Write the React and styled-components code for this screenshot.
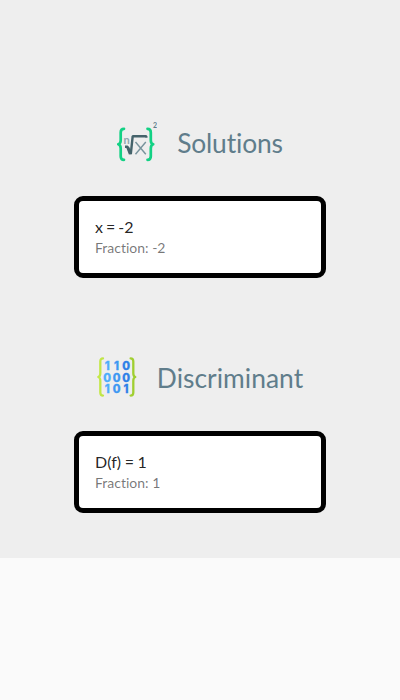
import React from "react";
import styled, { createGlobalStyle } from "styled-components";

const GlobalStyle = createGlobalStyle`
  body {
    margin: 0;
    background: #fafafa;
    font-family: Lato, "Open Sans", sans-serif;
    font-variant-ligatures: none;
  }
`;

const Results = styled.main`
  box-sizing: border-box;
  display: flex;
  flex-direction: column;
  align-items: center;
  gap: 75px;
  height: 558px;
  padding-top: 118px;
  background: #eeeeee;
`;

const Section = styled.section`
  display: flex;
  flex-direction: column;
  align-items: center;
  gap: 30px;
`;

const Heading = styled.header`
  display: flex;
  align-items: center;
  gap: 20px;
  height: 48px;
`;

const Icon = styled.svg`
  display: block;
  width: 40px;
  height: 40px;
  flex: none;
`;

const Title = styled.h2`
  margin: 0;
  padding-top: 2px;
  color: #607d8b;
  font-size: 26.4px;
  font-weight: 400;
  line-height: 40px;
  letter-spacing: ${(p) => p.$tracking}px;
  white-space: nowrap;
`;

const Card = styled.div`
  box-sizing: border-box;
  width: 252px;
  height: 82px;
  padding: 14px 16px;
  border: 5px solid #000;
  border-radius: 9px;
  background: #fff;
`;

const Primary = styled.p`
  margin: 0;
  color: rgba(0, 0, 0, 0.87);
  font-size: 16px;
  line-height: 24px;
  word-spacing: ${(p) => p.$wordSpacing}px;
`;

const Secondary = styled.p`
  margin: 0;
  color: rgba(0, 0, 0, 0.54);
  font-size: 14px;
  line-height: 18px;
`;

const Digits = styled.text`
  font-family: Inter, sans-serif;
  font-size: 11.2px;
  font-weight: 800;
  text-anchor: middle;
`;

const Symbol = styled.text`
  font-family: Lato, sans-serif;
  font-size: ${(p) => p.$size}px;
  font-weight: ${(p) => p.$weight || 400};
`;

function RootIcon() {
  return (
    <Icon viewBox="0 0 40 40" fill="none">
      <g stroke="#12d184" strokeWidth="2.7" strokeLinecap="round" strokeLinejoin="round">
        <path d="M7 6.8C4.4 6.8 3.7 8 3.7 10.4V18.2C3.7 20.4 3 21.8 1.3 22.3C3 22.8 3.7 24.2 3.7 26.4V34.2C3.7 36.6 4.4 37.8 7 37.8" />
        <path d="M30.5 6.8C33.1 6.8 33.8 8 33.8 10.4V18.2C33.8 20.4 34.5 21.8 36.2 22.3C34.5 22.8 33.8 24.2 33.8 26.4V34.2C33.8 36.6 33.1 37.8 30.5 37.8" />
      </g>
      <path d="M8 24.7H10.5L13.8 32L15.7 14.2H29.3V15.8" stroke="#45636b" strokeWidth="2.4" strokeLinejoin="bevel" />
      <path d="M10.8 25.5L13.3 32" stroke="#45636b" strokeWidth="3" />
      <path d="M18.5 20L28.8 32.3M28.8 20L18.5 32.3" stroke="#78939c" strokeWidth="1.4" />
      <Symbol $size={11} $weight={700} x="6.4" y="21.7" fill="#8fa5ad">n</Symbol>
      <Symbol $size={7} $weight={700} x="36" y="6" fill="#607d8b">2</Symbol>
    </Icon>
  );
}

function MatrixIcon() {
  const rows = [["1", "1", "0"], ["0", "0", "0"], ["1", "0", "1"]];
  const fills = ["#4dadfc", "#3e98f2", "#2f80e7"];
  return (
    <Icon viewBox="0 0 40 40" fill="none">
      <defs>
        <linearGradient id="brace" x1="0" y1="0" x2="40" y2="0" gradientUnits="userSpaceOnUse">
          <stop stopColor="#c6e94b" />
          <stop offset="1" stopColor="#9ccc2e" />
        </linearGradient>
      </defs>
      <g stroke="url(#brace)" strokeWidth="2.3" strokeLinecap="round" strokeLinejoin="round">
        <path d="M6 1.4C4.1 1.4 3.3 2.5 3.3 4.5V16.2C3.3 18.4 2.7 19.6 1.3 20C2.7 20.4 3.3 21.6 3.3 23.8V35.5C3.3 37.5 4.1 38.6 6 38.6" />
        <path d="M33.6 1.4C35.5 1.4 36.3 2.5 36.3 4.5V16.2C36.3 18.4 36.9 19.6 38.3 20C36.9 20.4 36.3 21.6 36.3 23.8V35.5C36.3 37.5 35.5 38.6 33.6 38.6" />
      </g>
      {rows.map((row, r) =>
        row.map((digit, c) => (
          <Digits
            key={`${r}-${c}`}
            x={10.2 + c * 9.4}
            y={12.8 + r * 11.8}
            fill={fills[c]}
            stroke={fills[c]}
            strokeWidth="0.3"
          >
            {digit}
          </Digits>
        ))
      )}
    </Icon>
  );
}

function Result({ icon, title, tracking, value, wordSpacing, fraction }) {
  return (
    <Section>
      <Heading>
        {icon}
        <Title $tracking={tracking}>{title}</Title>
      </Heading>
      <Card>
        <Primary $wordSpacing={wordSpacing}>{value}</Primary>
        <Secondary>Fraction: {fraction}</Secondary>
      </Card>
    </Section>
  );
}

export default function App() {
  return (
    <>
      <GlobalStyle />
      <Results>
        <Result
          icon={<RootIcon />}
          title="Solutions"
          tracking={-0.15}
          value="x = -2"
          wordSpacing={-1.1}
          fraction="-2"
        />
        <Result
          icon={<MatrixIcon />}
          title="Discriminant"
          tracking={0.03}
          value="D(f) = 1"
          wordSpacing={-0.5}
          fraction="1"
        />
      </Results>
    </>
  );
}
